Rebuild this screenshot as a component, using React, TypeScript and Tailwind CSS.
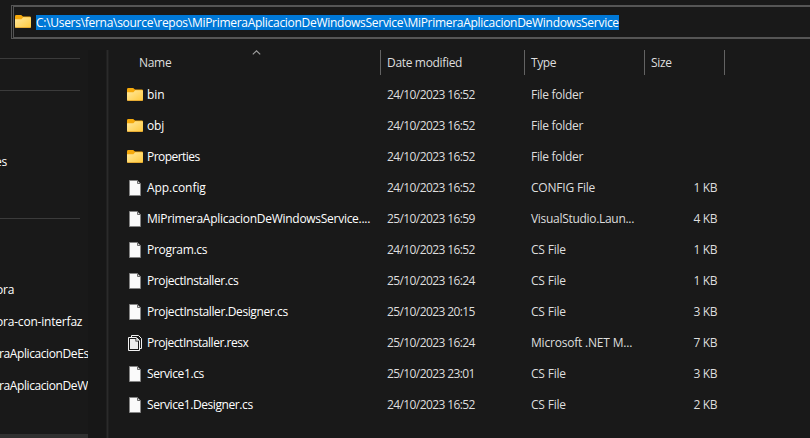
import React from "react";

type Kind = "folder" | "file" | "multi";
type Entry = { kind: Kind; name: string; track: string; date: string; type: string; typeTrack: string; size?: string };

const entries: Entry[] = [
  { kind: "folder", name: "bin", track: "tracking-[-0.1px]", date: "24/10/2023 16:52", type: "File folder", typeTrack: "tracking-[-0.3px]" },
  { kind: "folder", name: "obj", track: "tracking-[-0.1px]", date: "24/10/2023 16:52", type: "File folder", typeTrack: "tracking-[-0.3px]" },
  { kind: "folder", name: "Properties", track: "tracking-[-0.55px]", date: "24/10/2023 16:52", type: "File folder", typeTrack: "tracking-[-0.3px]" },
  { kind: "file", name: "App.config", track: "tracking-[-0.05px]", date: "24/10/2023 16:52", type: "CONFIG File", typeTrack: "tracking-[-0.2px]", size: "1 KB" },
  { kind: "file", name: "MiPrimeraAplicacionDeWindowsService....", track: "tracking-[-0.28px]", date: "25/10/2023 16:59", type: "VisualStudio.Laun...", typeTrack: "tracking-[-0.3px]", size: "4 KB" },
  { kind: "file", name: "Program.cs", track: "tracking-[-0.3px]", date: "24/10/2023 16:52", type: "CS File", typeTrack: "tracking-[-0.2px]", size: "1 KB" },
  { kind: "file", name: "ProjectInstaller.cs", track: "tracking-[-0.4px]", date: "25/10/2023 16:24", type: "CS File", typeTrack: "tracking-[-0.2px]", size: "1 KB" },
  { kind: "file", name: "ProjectInstaller.Designer.cs", track: "tracking-[-0.39px]", date: "25/10/2023 20:15", type: "CS File", typeTrack: "tracking-[-0.2px]", size: "3 KB" },
  { kind: "multi", name: "ProjectInstaller.resx", track: "tracking-[-0.46px]", date: "25/10/2023 16:24", type: "Microsoft .NET M...", typeTrack: "tracking-[-0.2px]", size: "7 KB" },
  { kind: "file", name: "Service1.cs", track: "tracking-[-0.4px]", date: "25/10/2023 23:01", type: "CS File", typeTrack: "tracking-[-0.2px]", size: "3 KB" },
  { kind: "file", name: "Service1.Designer.cs", track: "tracking-[-0.42px]", date: "24/10/2023 16:52", type: "CS File", typeTrack: "tracking-[-0.2px]", size: "2 KB" },
];

function FolderIcon() {
  return (
    <svg className="h-4 w-4 shrink-0" viewBox="0 0 16 16">
      <defs>
        <linearGradient id="folderFront" x1="0" y1="0" x2="1" y2="1">
          <stop offset="0" stopColor="#ffe9a0" />
          <stop offset="1" stopColor="#ffc93c" />
        </linearGradient>
      </defs>
      <path d="M0 2.4Q0 1 1.3 1H6.2L8 2.5H14.8Q16 2.5 16 3.7V8H0Z" fill="#f5a90c" />
      <path d="M0 5.2H6.4L8.2 3.3H15Q16 3.3 16 4.3V12.8Q16 14 14.8 14H1.2Q0 14 0 12.8Z" fill="url(#folderFront)" />
      <path d="M0 12.6Q0 14 1.2 14H14.8Q16 14 16 12.6Q15.6 13.2 14.8 13.2H1.2Q.4 13.2 0 12.6Z" fill="#dfa02a" />
    </svg>
  );
}

function FileIcon() {
  return (
    <svg className="h-4 w-4 shrink-0" viewBox="0 0 16 16">
      <path d="M2.5 .5H10.5L13.5 3.5V15.5H2.5Z" fill="#fafafa" stroke="#858585" />
      <path d="M10.5 .5V3.5H13.5Z" fill="#d5d5d5" stroke="#6c6c6c" />
    </svg>
  );
}

function MultiFileIcon() {
  return (
    <svg className="h-4 w-4 shrink-0" viewBox="0 0 16 16" fill="none">
      <path d="M4.5 2V.5H11.5L14.5 3.5V13.5H13" stroke="#f2f2f2" />
      <path d="M1.5 2.5H9.5L12.5 5.5V15.5H1.5Z" fill="#1a1a1a" stroke="#f2f2f2" />
      <path d="M3 4H8.5V6.5H11V14H3Z" fill="#ededed" />
      <path d="M9.5 3V5.5H12Z" fill="#ededed" stroke="#d0d0d0" strokeWidth=".6" />
    </svg>
  );
}

function EntryIcon({ kind }: { kind: Kind }) {
  if (kind === "folder") return <FolderIcon />;
  if (kind === "multi") return <MultiFileIcon />;
  return <FileIcon />;
}

function Sidebar() {
  return (
    <aside className="flex w-[88px] shrink-0 flex-col overflow-hidden whitespace-nowrap tracking-[-0.2px] text-white">
      <div className="mt-2 h-px w-20 shrink-0 bg-[#3b3b3b]" />
      <div className="mt-[31px] h-px w-20 shrink-0 bg-[#3b3b3b]" />
      <div className="-ml-[5px] mt-[55px] flex h-8 shrink-0 items-center">es</div>
      <div className="mt-10 h-px w-20 shrink-0 bg-[#3b3b3b]" />
      <div className="-ml-1 mt-[55px] flex h-8 shrink-0 items-center">ora</div>
      <div className="-ml-1 flex h-8 shrink-0 items-center">ora-con-interfaz</div>
      <div className="-ml-px flex h-8 shrink-0 items-center tracking-[-0.4px]">raAplicacionDeEs</div>
      <div className="-ml-px flex h-8 shrink-0 items-center tracking-[-0.4px]">raAplicacionDeW</div>
      <div className="mt-auto h-1 shrink-0 bg-[#303030]" />
    </aside>
  );
}

export default function App() {
  return (
    <div className="flex h-[438px] w-[810px] flex-col overflow-hidden bg-[#191919] font-['Open_Sans','Noto_Sans',sans-serif] text-[12px] leading-4 text-[#dedede]">
      <header className="h-[50px] shrink-0 pl-[11px] pt-[5px]">
        <div className="h-[34px] border-y border-l border-[#555] pl-px">
          <div className="flex h-8 items-center border-y border-l border-[#555] pl-px">
            <FolderIcon />
            <span className="ml-[5px] h-[15px] w-[583px] whitespace-nowrap bg-[#0078d7] leading-[15px] tracking-[-0.285px] text-white">
              C:\Users\ferna\source\repos\MiPrimeraAplicacionDeWindowsService\MiPrimeraAplicacionDeWindowsService
            </span>
          </div>
        </div>
      </header>
      <div className="flex min-h-0 flex-1">
        <Sidebar />
        <div className="w-[18px] shrink-0 bg-[#171717]" />
        <div className="w-[3px] shrink-0 border-x border-[#202020] bg-[#2b2b2b]" />
        <main className="flex flex-1 flex-col whitespace-nowrap">
          <div className="flex h-[25px] shrink-0 items-center">
            <div className="relative flex h-full w-[272px] items-center border-r border-[#636363] pl-[30px] tracking-[-0.3px]">
              Name
              <svg className="absolute left-[143px] top-0 h-[5px] w-[9px]" viewBox="0 0 9 5" fill="none">
                <path d="M.8 4.4L4.5 .8L8.2 4.4" stroke="#a0a0a0" strokeWidth="1.1" />
              </svg>
            </div>
            <div className="flex h-full w-36 items-center border-r border-[#636363] pl-1.5 tracking-[-0.33px]">Date modified</div>
            <div className="flex h-full w-[120px] items-center border-r border-[#636363] pl-1.5 tracking-[-0.4px]">Type</div>
            <div className="flex h-full w-20 items-center border-r border-[#636363] pl-1.5 tracking-[-0.3px]">Size</div>
          </div>
          <div className="flex flex-col pt-1">
            {entries.map((e) => (
              <div key={e.name} className="flex h-[31px] items-center">
                <div className="flex w-[278px] items-center pl-[18px] text-white">
                  <EntryIcon kind={e.kind} />
                  <span className={`ml-1 ${e.track}`}>{e.name}</span>
                </div>
                <div className="w-36 tracking-[-0.6px]">{e.date}</div>
                <div className={`w-[120px] ${e.typeTrack}`}>{e.type}</div>
                <div className="w-[66px] text-right tracking-[-0.4px]">{e.size}</div>
              </div>
            ))}
          </div>
        </main>
      </div>
    </div>
  );
}
